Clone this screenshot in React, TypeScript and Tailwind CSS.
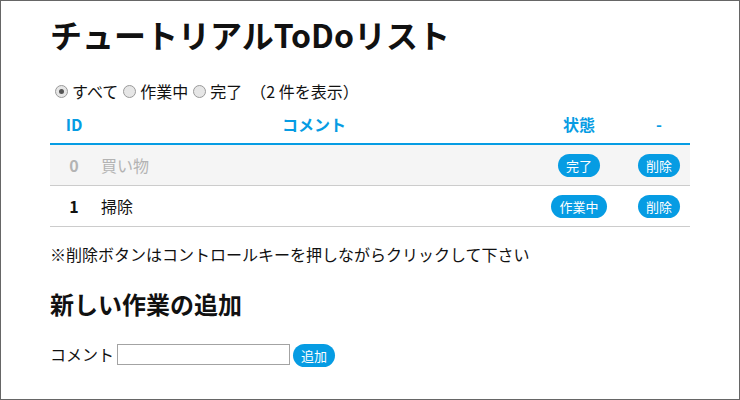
import React from 'react';

const todos = [
  { id: 0, comment: '買い物', done: true },
  { id: 1, comment: '掃除', done: false },
];

const Pill = ({ children }: { children: React.ReactNode }) => (
  <button className="h-[23px] rounded-full bg-[#069ce3] px-[8px] text-[13px] leading-[23px] text-white">
    {children}
  </button>
);

const Radio = ({ checked }: { checked?: boolean }) => (
  <span className="ml-[5px] mr-[4px] inline-flex h-[13px] w-[13px] items-center justify-center rounded-full border border-[#9a9a9a] bg-[#e6e6e6]">
    {checked && <span className="h-[5px] w-[5px] rounded-full bg-[#555]" />}
  </span>
);

export default function App() {
  return (
    <div
      className="h-[400px] w-[740px] border border-[#666] bg-white text-[16px] text-[#111]"
      style={{ fontFamily: '"Noto Sans CJK JP", "Noto Sans", sans-serif' }}
    >
      <div className="px-[49px] pt-[9px]">
        <h1 className="text-[32px] font-bold leading-[48px]">チュートリアルToDoリスト</h1>

        {/* Filter */}
        <div className="mt-[22px] flex items-center leading-[22px]">
          <label className="flex items-center">
            <Radio checked />
            <span>すべて</span>
          </label>
          <label className="flex items-center">
            <Radio />
            <span>作業中</span>
          </label>
          <label className="flex items-center">
            <Radio />
            <span>完了</span>
          </label>
          <span className="ml-[8px]">（2 件を表示）</span>
        </div>

        {/* Table */}
        <table className="mt-[4px] w-[640px] border-collapse">
          <thead>
            <tr className="h-[38px] border-b-2 border-[#069ce3] text-[#069ce3]">
              <th className="w-[48px] pb-[2px] text-center font-bold">ID</th>
              <th className="w-[432px] pb-[2px] text-center font-bold">コメント</th>
              <th className="w-[98px] pb-[2px] text-center font-bold">状態</th>
              <th className="w-[62px] pb-[2px] text-center font-bold">-</th>
            </tr>
          </thead>
          <tbody>
            {todos.map((t) => (
              <tr
                key={t.id}
                className={`h-[41px] border-b border-[#ccc] ${t.done ? 'bg-[#f5f5f5] text-[#b3b3b3]' : 'text-[#111]'}`}
              >
                <td className="text-center font-bold">{t.id}</td>
                <td className="pl-[3px]">{t.comment}</td>
                <td className="text-center">
                  <Pill>{t.done ? '完了' : '作業中'}</Pill>
                </td>
                <td className="text-center">
                  <Pill>削除</Pill>
                </td>
              </tr>
            ))}
          </tbody>
        </table>

        <p className="mt-[15px] leading-[24px]">※削除ボタンはコントロールキーを押しながらクリックして下さい</p>

        <h2 className="mt-[20px] text-[24px] font-bold leading-[36px]">新しい作業の追加</h2>

        <div className="mt-[20px] flex items-center">
          <span>コメント</span>
          <input type="text" className="ml-[3px] h-[21px] w-[173px] border border-[#a3a3a3] px-1" />
          <span className="ml-[3px]">
            <Pill>追加</Pill>
          </span>
        </div>
      </div>
    </div>
  );
}
